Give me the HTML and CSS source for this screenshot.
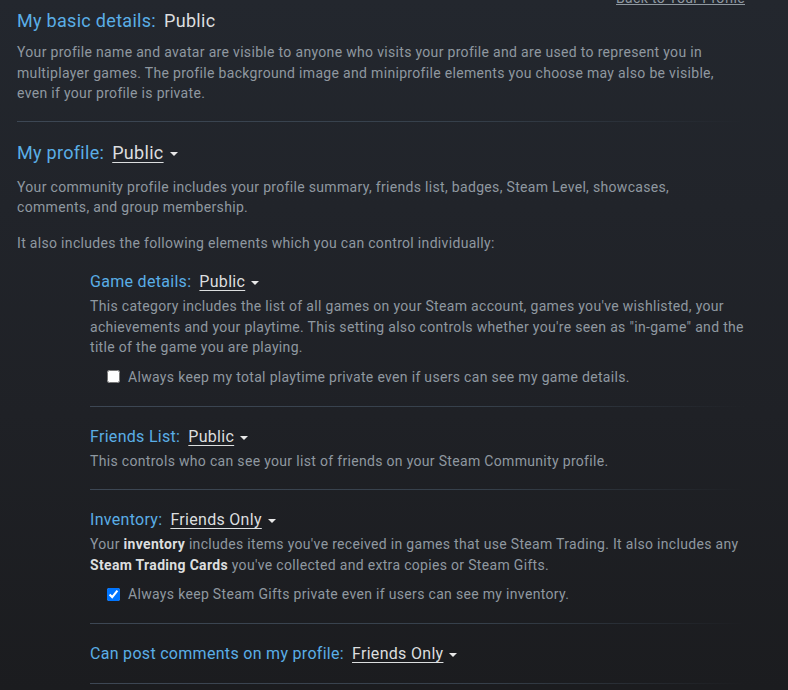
FILE: index.html
```html
<!DOCTYPE html>
<html lang="en">
<head>
<meta charset="utf-8">
<title>Privacy Settings</title>
<link rel="stylesheet" href="styles.css">
</head>
<body>
<div class="page">
  <div class="topbar"><a class="back" href="#">Back to Your Profile</a></div>

  <div class="section">
    <div class="heading first"><span class="label">My basic details:</span><span class="value plain">Public</span></div>
    <p class="desc">Your profile name and avatar are visible to anyone who visits your profile and are used to represent you in multiplayer games. The profile background image and miniprofile elements you choose may also be visible, even if your profile is private.</p>
  </div>

  <div class="section">
    <div class="heading"><span class="label">My profile:</span><span class="value">Public</span><span class="caret"></span></div>
    <p class="desc">Your community profile includes your profile summary, friends list, badges, Steam Level, showcases, comments, and group membership.</p>
    <p class="desc second">It also includes the following elements which you can control individually:</p>

    <div class="sub">
      <div class="subhead"><span class="label">Game details:</span><span class="value">Public</span><span class="caret"></span></div>
      <p class="desc">This category includes the list of all games on your Steam account, games you've wishlisted, your achievements and your playtime. This setting also controls whether you're seen as "in-game" and the title of the game you are playing.</p>
      <label class="check"><input type="checkbox"><span>Always keep my total playtime private even if users can see my game details.</span></label>
    </div>

    <div class="sub">
      <div class="subhead"><span class="label">Friends List:</span><span class="value">Public</span><span class="caret"></span></div>
      <p class="desc">This controls who can see your list of friends on your Steam Community profile.</p>
    </div>

    <div class="sub">
      <div class="subhead"><span class="label">Inventory:</span><span class="value">Friends Only</span><span class="caret"></span></div>
      <p class="desc">Your <b>inventory</b> includes items you've received in games that use Steam Trading. It also includes any <b>Steam Trading Cards</b> you've collected and extra copies or Steam Gifts.</p>
      <label class="check"><input type="checkbox" checked><span>Always keep Steam Gifts private even if users can see my inventory.</span></label>
    </div>

    <div class="sub last">
      <div class="subhead"><span class="label">Can post comments on my profile:</span><span class="value">Friends Only</span><span class="caret"></span></div>
    </div>
  </div>
</div>
</body>
</html>
```

FILE: styles.css
```css
html, body {
  margin: 0;
  padding: 0;
}
body {
  background: linear-gradient(to bottom, #23272e 0%, #1f2126 60%, #1b1c1f 100%);
  min-height: 690px;
  font-family: Roboto, "Liberation Sans", sans-serif;
  color: #8f98a0;
  overflow: hidden;
}
.page {
  width: 728px;
  padding-left: 17px;
}
.topbar {
  display: flex;
  justify-content: flex-end;
  margin-top: -12px;
  height: 17px;
}
.back {
  color: #8f98a0;
  font-size: 14px;
  line-height: 20px;
  letter-spacing: 0.32px;
  text-decoration: underline;
}
.heading {
  display: flex;
  align-items: center;
  font-size: 18px;
  line-height: 24px;
  letter-spacing: 0.3px;
  margin-top: 19px;
}
.heading.first {
  margin-top: 4px;
}
.label {
  color: #5aaee6;
}
.value {
  color: #dcdedf;
  text-decoration: underline;
  text-underline-offset: 3px;
  text-decoration-thickness: 1px;
  margin-left: 8px;
}
.value.plain {
  text-decoration: none;
}
.caret {
  width: 0;
  height: 0;
  border-left: 4px solid transparent;
  border-right: 4px solid transparent;
  border-top: 4px solid #e8e8e8;
  margin-left: 6px;
  margin-top: 2px;
}
.desc {
  margin: 0;
  font-size: 14px;
  line-height: 20.5px;
  letter-spacing: 0.32px;
  color: #8f98a0;
}
.heading + .desc {
  margin-top: 12px;
}
.heading.first + .desc {
  margin-top: 9px;
}
.desc.second {
  margin-top: 15px;
}
.desc b {
  color: #dcdedf;
  font-weight: bold;
}
.section:nth-child(2)::after {
  content: "";
  display: block;
  height: 1px;
  margin-top: 17px;
  background: linear-gradient(to right, #3d4754 0%, #36404b 60%, rgba(54,64,75,0) 100%);
}
.sub {
  margin-left: 73px;
  padding: 19px 0 19px;
  position: relative;
}
.sub::after {
  content: "";
  position: absolute;
  left: 0;
  right: 0;
  bottom: 0;
  height: 1px;
  background: linear-gradient(to right, #3d4754 0%, #36404b 60%, rgba(54,64,75,0) 100%);
}
.desc.second + .sub {
  padding-top: 18px;
}
.subhead {
  display: flex;
  align-items: center;
  font-size: 16px;
  line-height: 22px;
  letter-spacing: 0.3px;
  margin-bottom: 3px;
}
.sub.last .subhead {
  margin-bottom: 0;
}
.check {
  display: flex;
  align-items: center;
  margin-top: 8px;
  margin-left: 17px;
  font-size: 14px;
  line-height: 22px;
  letter-spacing: 0.32px;
  color: #8f98a0;
}
.check input {
  margin: 0 8px 0 0;
  width: 13px;
  height: 13px;
}
```
